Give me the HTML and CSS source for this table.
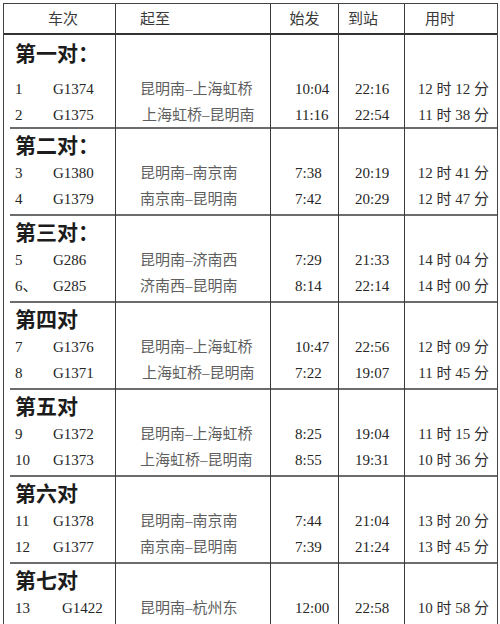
FILE: index.html
```html
<!DOCTYPE html>
<html lang="zh-CN">
<head>
<meta charset="utf-8">
<title>昆明南高铁时刻表</title>
<link rel="stylesheet" href="styles.css">
</head>
<body>
<div class="tbl">
  <div class="head">
    <div class="c c1 h1">车次</div>
    <div class="c c2 h2">起至</div>
    <div class="c c3 h3">始发</div>
    <div class="c c4 h4">到站</div>
    <div class="c c5 h5">用时</div>
  </div>

  <section class="sec sec-first">
    <div class="c c1 title">第一对：</div><div class="c c2"></div><div class="c c3"></div><div class="c c4"></div><div class="c c5"></div>
    <div class="c c1 row"><span class="no">1</span><span class="code">G1374</span></div>
    <div class="c c2 row route">昆明南–上海虹桥</div>
    <div class="c c3 row dep">10:04</div>
    <div class="c c4 row arr">22:16</div>
    <div class="c c5 row dur">12 时 12 分</div>
    <div class="c c1 row"><span class="no">2</span><span class="code">G1375</span></div>
    <div class="c c2 row route shift">上海虹桥–昆明南</div>
    <div class="c c3 row dep">11:16</div>
    <div class="c c4 row arr">22:54</div>
    <div class="c c5 row dur">11 时 38 分</div>
  </section>

  <section class="sec">
    <div class="c c1 title">第二对：</div><div class="c c2"></div><div class="c c3"></div><div class="c c4"></div><div class="c c5"></div>
    <div class="c c1 row"><span class="no">3</span><span class="code">G1380</span></div>
    <div class="c c2 row route">昆明南–南京南</div>
    <div class="c c3 row dep">7:38</div>
    <div class="c c4 row arr">20:19</div>
    <div class="c c5 row dur">12 时 41 分</div>
    <div class="c c1 row"><span class="no">4</span><span class="code">G1379</span></div>
    <div class="c c2 row route">南京南–昆明南</div>
    <div class="c c3 row dep">7:42</div>
    <div class="c c4 row arr">20:29</div>
    <div class="c c5 row dur">12 时 47 分</div>
  </section>

  <section class="sec">
    <div class="c c1 title">第三对：</div><div class="c c2"></div><div class="c c3"></div><div class="c c4"></div><div class="c c5"></div>
    <div class="c c1 row"><span class="no">5</span><span class="code">G286</span></div>
    <div class="c c2 row route">昆明南–济南西</div>
    <div class="c c3 row dep">7:29</div>
    <div class="c c4 row arr">21:33</div>
    <div class="c c5 row dur">14 时 04 分</div>
    <div class="c c1 row"><span class="no">6、</span><span class="code">G285</span></div>
    <div class="c c2 row route">济南西–昆明南</div>
    <div class="c c3 row dep">8:14</div>
    <div class="c c4 row arr">22:14</div>
    <div class="c c5 row dur">14 时 00 分</div>
  </section>

  <section class="sec">
    <div class="c c1 title">第四对</div><div class="c c2"></div><div class="c c3"></div><div class="c c4"></div><div class="c c5"></div>
    <div class="c c1 row"><span class="no">7</span><span class="code">G1376</span></div>
    <div class="c c2 row route">昆明南–上海虹桥</div>
    <div class="c c3 row dep">10:47</div>
    <div class="c c4 row arr">22:56</div>
    <div class="c c5 row dur">12 时 09 分</div>
    <div class="c c1 row"><span class="no">8</span><span class="code">G1371</span></div>
    <div class="c c2 row route shift">上海虹桥–昆明南</div>
    <div class="c c3 row dep">7:22</div>
    <div class="c c4 row arr">19:07</div>
    <div class="c c5 row dur">11 时 45 分</div>
  </section>

  <section class="sec">
    <div class="c c1 title">第五对</div><div class="c c2"></div><div class="c c3"></div><div class="c c4"></div><div class="c c5"></div>
    <div class="c c1 row"><span class="no">9</span><span class="code">G1372</span></div>
    <div class="c c2 row route">昆明南–上海虹桥</div>
    <div class="c c3 row dep">8:25</div>
    <div class="c c4 row arr">19:04</div>
    <div class="c c5 row dur">11 时 15 分</div>
    <div class="c c1 row"><span class="no">10</span><span class="code">G1373</span></div>
    <div class="c c2 row route">上海虹桥–昆明南</div>
    <div class="c c3 row dep">8:55</div>
    <div class="c c4 row arr">19:31</div>
    <div class="c c5 row dur">10 时 36 分</div>
  </section>

  <section class="sec">
    <div class="c c1 title">第六对</div><div class="c c2"></div><div class="c c3"></div><div class="c c4"></div><div class="c c5"></div>
    <div class="c c1 row"><span class="no">11</span><span class="code">G1378</span></div>
    <div class="c c2 row route">昆明南–南京南</div>
    <div class="c c3 row dep">7:44</div>
    <div class="c c4 row arr">21:04</div>
    <div class="c c5 row dur">13 时 20 分</div>
    <div class="c c1 row"><span class="no">12</span><span class="code">G1377</span></div>
    <div class="c c2 row route">南京南–昆明南</div>
    <div class="c c3 row dep">7:39</div>
    <div class="c c4 row arr">21:24</div>
    <div class="c c5 row dur">13 时 45 分</div>
  </section>

  <section class="sec">
    <div class="c c1 title">第七对</div><div class="c c2"></div><div class="c c3"></div><div class="c c4"></div><div class="c c5"></div>
    <div class="c c1 row"><span class="no">13</span><span class="code code-wide">G1422</span></div>
    <div class="c c2 row route">昆明南–杭州东</div>
    <div class="c c3 row dep">12:00</div>
    <div class="c c4 row arr">22:58</div>
    <div class="c c5 row dur">10 时 58 分</div>
    <div class="c c1 row"><span class="no">14</span><span class="code code-wide">G1421</span></div>
    <div class="c c2 row route">杭州东–昆明南</div>
    <div class="c c3 row dep">7:34</div>
    <div class="c c4 row arr">18:13</div>
    <div class="c c5 row dur">10 时 39 分</div>
  </section>
</div>
</body>
</html>
```

FILE: styles.css
```css
html, body {
  margin: 0;
  padding: 0;
  background: #ffffff;
  overflow: hidden;
}

.tbl {
  margin: 3px 0 0 3px;
  width: 495px;
  box-sizing: border-box;
  border: 1px solid #444;
  border-bottom: none;
}

.head,
.sec {
  display: grid;
  grid-template-columns: 112px 155px 68px 66px 92px;
}

.c {
  box-sizing: border-box;
  min-width: 0;
  white-space: nowrap;
}

.c1, .c2, .c3, .c4 {
  border-right: 1px solid #3a3a3a;
}

/* header */
.head {
  height: 29px;
  border-bottom: 2px solid #333;
}

.head .c {
  font-family: "Noto Sans CJK SC", sans-serif;
  font-size: 15px;
  line-height: 27px;
  color: #3a3a3a;
}

.h1 { padding-left: 44px; }
.h2 { padding-left: 24px; }
.h3 { text-align: center; }
.h4 { padding-left: 9px; }
.h5 { padding-left: 20px; }

/* sections */
.sec {
  grid-template-rows: 33px 26px 28px;
  background: linear-gradient(#6c6c6c, #6c6c6c) 6px 0 / calc(100% - 6px) 2px no-repeat;
}

.sec-first {
  grid-template-rows: 41px 26px 25px;
  background: none;
}

.title {
  font-family: "Noto Sans CJK SC", sans-serif;
  font-weight: 700;
  font-size: 21px;
  line-height: 34px;
  color: #1c1c1c;
  padding-left: 11px;
}

.sec-first .title {
  line-height: 34px;
}

.row {
  font-family: "Liberation Serif", "Noto Sans CJK SC", serif;
  font-size: 15px;
  line-height: 26px;
  color: #262626;
}

.c1.row {
  display: flex;
  padding-left: 11px;
}

.no {
  width: 38px;
  flex: none;
}

.code-wide {
  padding-left: 9px;
}

.route {
  padding-left: 24px;
  color: #5e5e5e;
}

.route.shift {
  padding-left: 26px;
}

.dep {
  padding-left: 24px;
}

.arr {
  padding-left: 16px;
}

.dur {
  text-align: right;
  padding-right: 8px;
  color: #2e2e2e;
}
```
